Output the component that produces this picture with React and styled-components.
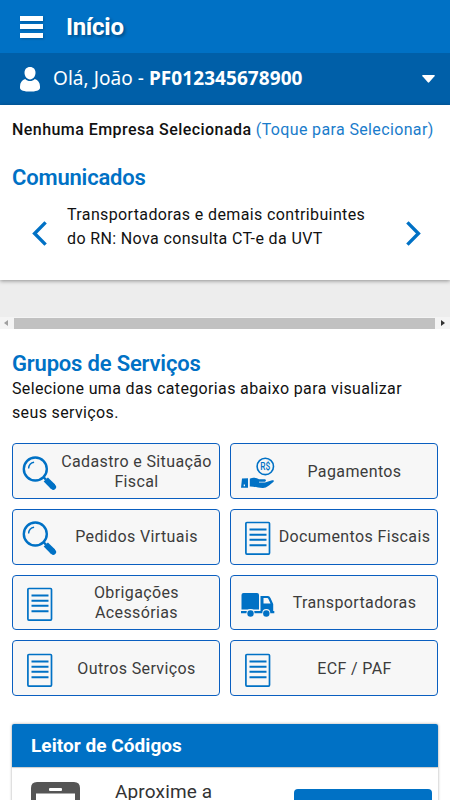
import styled, { createGlobalStyle } from 'styled-components';

const GlobalStyle = createGlobalStyle`
    * {
        box-sizing: border-box;
    }

    body {
        margin: 0;
        background-color: #ffffff;
        font-family: Roboto, sans-serif;
        color: #111111;
        overflow: hidden;
    }

    h1, h2, h3, p {
        margin: 0;
    }
`

const AppContainer = styled.div`
    display: flex;
    flex-direction: column;
    height: 800px;
    overflow: hidden;
`

const TopBar = styled.header`
    display: flex;
    align-items: center;
    flex: none;
    height: 53px;
    padding-left: 20px;
    background-color: #0071c5;
`

const MenuButton = styled.button`
    display: flex;
    flex-direction: column;
    gap: 3.5px;
    width: 23px;
    padding: 0;
    border: 0;
    background: none;
    filter: drop-shadow(1px 1px 1px rgba(0, 0, 0, 0.2));
`

const MenuBar = styled.span`
    height: 5px;
    background-color: #ffffff;
`

const PageTitle = styled.h1`
    margin-left: 23px;
    font-size: 24px;
    line-height: 30px;
    font-weight: 700;
    letter-spacing: -0.3px;
    color: #ffffff;
    text-shadow: 2px 2px 3px rgba(0, 0, 0, 0.3);
`

const UserBar = styled.div`
    display: flex;
    align-items: center;
    flex: none;
    height: 52px;
    padding: 0 15px 0 20px;
    background-color: #005fa8;
    color: #ffffff;
`

const UserName = styled.p`
    flex: 1;
    margin-left: 13px;
    padding-bottom: 2px;
    font-family: "Noto Sans", sans-serif;
    font-size: 19px;
    line-height: 26px;
    letter-spacing: 0.06px;
`

const News = styled.section`
    flex: none;
    height: 175px;
    padding: 13px 12px 0;
    position: relative;
    background-color: #ffffff;
    box-shadow: 0 1px 4px rgba(0, 0, 0, 0.4);
`

const Company = styled.p`
    margin-bottom: 22px;
    font-size: 16px;
    line-height: 24px;
    letter-spacing: 0.36px;
    white-space: nowrap;

    strong {
        font-weight: 500;
        letter-spacing: 0.44px;
    }

    span {
        color: #1a7ccb;
    }
`

const SectionTitle = styled.h2`
    font-size: 22px;
    line-height: 28px;
    font-weight: 600;
    letter-spacing: -0.18px;
    color: #0071c5;
`

const Carousel = styled.div`
    display: flex;
    align-items: flex-start;
    margin-top: 11px;
    padding: 0 17px 0 20px;

    svg {
        flex: none;
        margin-top: 18px;
    }
`

const NewsText = styled.p`
    flex: 1;
    margin-left: 20px;
    font-size: 16px;
    line-height: 24px;
    letter-spacing: 0.37px;
    white-space: nowrap;
`

const Band = styled.div`
    display: flex;
    flex-direction: column;
    justify-content: flex-end;
    flex: none;
    height: 49px;
    background-color: #ededed;
`

const Scrollbar = styled.div`
    display: flex;
    align-items: center;
    justify-content: space-between;
    height: 12px;
    padding: 0 5px 0 4px;
    background-color: #f4f4f4;
`

const Thumb = styled.div`
    width: 421px;
    height: 11px;
    background-color: #c1c1c1;
`

const Services = styled.section`
    flex: none;
    padding: 21px 12px 0;
`

const Intro = styled.p`
    margin-top: -1px;
    font-size: 16px;
    line-height: 24px;
    letter-spacing: 0.36px;
`

const ServiceGrid = styled.div`
    display: grid;
    grid-template-columns: 208px 208px;
    grid-auto-rows: 55.7px;
    gap: 10px;
    margin-top: 18.2px;
`

const ServiceCard = styled.button`
    display: flex;
    align-items: center;
    padding: 0 4px 0 9px;
    border: 1px solid #0a5fc0;
    border-radius: 4px;
    background-color: #f7f7f7;
    color: #3c3c3c;

    svg {
        flex: none;
        margin-top: 5px;
    }
`

const ServiceLabel = styled.span`
    flex: 1;
    margin: 1px -1px 0 -1px;
    font-family: Roboto, sans-serif;
    font-size: 16px;
    line-height: 20px;
    letter-spacing: 0.38px;
    text-align: center;
`

const ReaderCard = styled.section`
    flex: none;
    height: 120px;
    margin: 28.2px 12px 0;
    border-radius: 2px;
    box-shadow: 0 0 3px rgba(0, 0, 0, 0.35);
`

const ReaderHeader = styled.div`
    height: 43px;
    padding-left: 19px;
    border-radius: 2px 2px 0 0;
    background-color: #0071c5;
    box-shadow: 0 1px 1px rgba(0, 0, 0, 0.2);
`

const ReaderTitle = styled.h3`
    font-size: 19px;
    line-height: 43px;
    font-weight: 700;
    letter-spacing: 0.05px;
    color: #ffffff;
`

const ReaderBody = styled.div`
    display: flex;
    align-items: flex-start;
    padding: 15px 6px 0 19px;
`

const ReaderText = styled.p`
    flex: 1;
    margin: -2px 0 0 34px;
    font-size: 19px;
    line-height: 24px;
    letter-spacing: 0.15px;
    color: #333333;
`

const ReaderButton = styled.button`
    width: 138px;
    height: 40px;
    margin-top: 7px;
    border: 0;
    border-radius: 4px;
    background-color: #0071c5;
`

function UserIcon() {
    return (
        <svg width="20" height="25" viewBox="0 0 20 25" fill="#ffffff">
            <path d="M10 0C13.5 0 15.5 2.3 15.5 5.8C15.5 9.5 13 12.4 10 12.4C7 12.4 4.5 9.5 4.5 5.8C4.5 2.3 6.5 0 10 0Z" />
            <path d="M5.2 12C6.6 13.5 8.2 14.1 10 14.1C11.8 14.1 13.4 13.5 14.8 12C18 13 20 15.5 20 19.5V21C20 23.5 15.5 24.6 10 24.6C4.5 24.6 0 23.5 0 21V19.5C0 15.5 2 13 5.2 12Z" />
        </svg>
    );
}

function CaretIcon() {
    return (
        <svg width="13" height="8" viewBox="0 0 13 8">
            <path d="M.8 0H12.2Q13.3 .2 12.5 1.2L7.2 7.3Q6.5 8 5.8 7.3L.5 1.2Q-.3 .2 .8 0Z" fill="#ffffff" />
        </svg>
    );
}

function ChevronIcon({ right }) {
    return (
        <svg width="15" height="25" viewBox="0 0 15 25" fill="none" stroke="#0071c5" strokeWidth="3.4">
            <path d={right ? 'M1.4 1.4L12.4 12.5L1.4 23.6' : 'M13.6 1.4L2.6 12.5L13.6 23.6'} />
        </svg>
    );
}

function SearchIcon() {
    return (
        <svg width="36" height="36" viewBox="0 0 36 36" fill="none" stroke="#0071c5">
            <circle cx="13.3" cy="13" r="11.5" strokeWidth="2.4" />
            <path d="M6.6 12.5C6.8 9 8.8 6.7 12.1 6.2" strokeWidth="1.4" />
            <path d="M21.3 21L24 23.7" strokeWidth="2.4" />
            <path d="M23.8 23.5L31 30.7" strokeWidth="6" />
            <path d="M30.5 30.2L31.3 31" strokeWidth="5.6" strokeLinecap="round" />
        </svg>
    );
}

function PayIcon() {
    return (
        <svg width="36" height="36" viewBox="0 0 36 36" fill="#0071c5">
            <circle cx="25.3" cy="10.4" r="8.2" fill="none" stroke="#0071c5" strokeWidth="1.6" />
            <text x="25.3" y="14.3" textAnchor="middle" fontFamily="Roboto, sans-serif" fontSize="11" fontWeight="500" textLength="10" lengthAdjust="spacingAndGlyphs">R$</text>
            <path fillRule="evenodd" d="M2 22.4L8 22.2V31.8H1ZM3.7 28.4V30.3H5V28.4Z" />
            <path d="M9.8 22.8C14 20.7 17 22 19 23.2H24.2C26.5 23.2 26.5 25.5 24.2 25.7H19V26.5H25L31.3 24.4C34 23.6 34.8 24.8 33 26.2C29.5 29 27 31.8 23 31.9C18 32 14.5 30.4 9.8 30.5Z" />
        </svg>
    );
}

function DocumentIcon() {
    return (
        <svg width="36" height="36" viewBox="0 0 36 36" fill="none" stroke="#0071c5" strokeWidth="1.7">
            <rect x="5.9" y="1.5" width="23.6" height="31.6" rx="1" />
            <path d="M9.5 8.5H26.5M9.5 13.8H26.5M9.5 18.8H26.5M9.5 24.2H26.5" strokeWidth="1.9" />
        </svg>
    );
}

function TruckIcon() {
    return (
        <svg width="36" height="36" viewBox="0 0 36 36" fill="#0071c5">
            <path d="M3.5 6H17Q19 6 19 8V22.5H1.5V8Q1.5 6 3.5 6Z" />
            <path fillRule="evenodd" d="M20.5 9H28Q29.5 9 30.5 11L33.2 17V24H20.5ZM23.5 11V16.5H30.5L28.3 11.7Q28 11 27.2 11Z" />
            <path d="M1 24H34.3V26.3H1Z" />
            <circle cx="10.5" cy="26" r="4" fill="#f7f7f7" />
            <circle cx="26.3" cy="26" r="4" fill="#f7f7f7" />
            <circle cx="10.5" cy="26.5" r="3.2" />
            <circle cx="26.3" cy="26.5" r="3.2" />
        </svg>
    );
}

function PhoneIcon() {
    return (
        <svg width="50" height="70" viewBox="0 0 50 70">
            <path fillRule="evenodd" d="M6 0H43Q49 0 49 6V70H0V6Q0 0 6 0ZM5 11.5V62H44V11.5Z" fill="#555555" />
            <rect x="18" y="6" width="13" height="3" rx="1" fill="#ffffff" />
        </svg>
    );
}

const services = [
    { label: 'Cadastro e Situação Fiscal', icon: SearchIcon },
    { label: 'Pagamentos', icon: PayIcon },
    { label: 'Pedidos Virtuais', icon: SearchIcon },
    { label: 'Documentos Fiscais', icon: DocumentIcon },
    { label: 'Obrigações Acessórias', icon: DocumentIcon },
    { label: 'Transportadoras', icon: TruckIcon },
    { label: 'Outros Serviços', icon: DocumentIcon },
    { label: 'ECF / PAF', icon: DocumentIcon },
];

function App() {
    return (
        <AppContainer>
            <GlobalStyle />
            <TopBar>
                <MenuButton>
                    <MenuBar />
                    <MenuBar />
                    <MenuBar />
                </MenuButton>
                <PageTitle>Início</PageTitle>
            </TopBar>
            <UserBar>
                <UserIcon />
                <UserName>Olá, João - <strong>PF012345678900</strong></UserName>
                <CaretIcon />
            </UserBar>
            <News>
                <Company><strong>Nenhuma Empresa Selecionada</strong> <span>(Toque para Selecionar)</span></Company>
                <SectionTitle>Comunicados</SectionTitle>
                <Carousel>
                    <ChevronIcon />
                    <NewsText>Transportadoras e demais contribuintes<br />do RN: Nova consulta CT-e da UVT</NewsText>
                    <ChevronIcon right />
                </Carousel>
            </News>
            <Band>
                <Scrollbar>
                    <svg width="5" height="6" viewBox="0 0 5 6"><path d="M4 0V6L0 3Z" fill="#a0a0a0" /></svg>
                    <Thumb />
                    <svg width="5" height="6" viewBox="0 0 5 6"><path d="M1 0V6L5 3Z" fill="#333333" /></svg>
                </Scrollbar>
            </Band>
            <Services>
                <SectionTitle>Grupos de Serviços</SectionTitle>
                <Intro>Selecione uma das categorias abaixo para visualizar seus serviços.</Intro>
                <ServiceGrid>
                    {services.map(({ label, icon: Icon }) => (
                        <ServiceCard key={label}>
                            <Icon />
                            <ServiceLabel>{label}</ServiceLabel>
                        </ServiceCard>
                    ))}
                </ServiceGrid>
            </Services>
            <ReaderCard>
                <ReaderHeader>
                    <ReaderTitle>Leitor de Códigos</ReaderTitle>
                </ReaderHeader>
                <ReaderBody>
                    <PhoneIcon />
                    <ReaderText>Aproxime a</ReaderText>
                    <ReaderButton />
                </ReaderBody>
            </ReaderCard>
        </AppContainer>
    );
}

export default App;
